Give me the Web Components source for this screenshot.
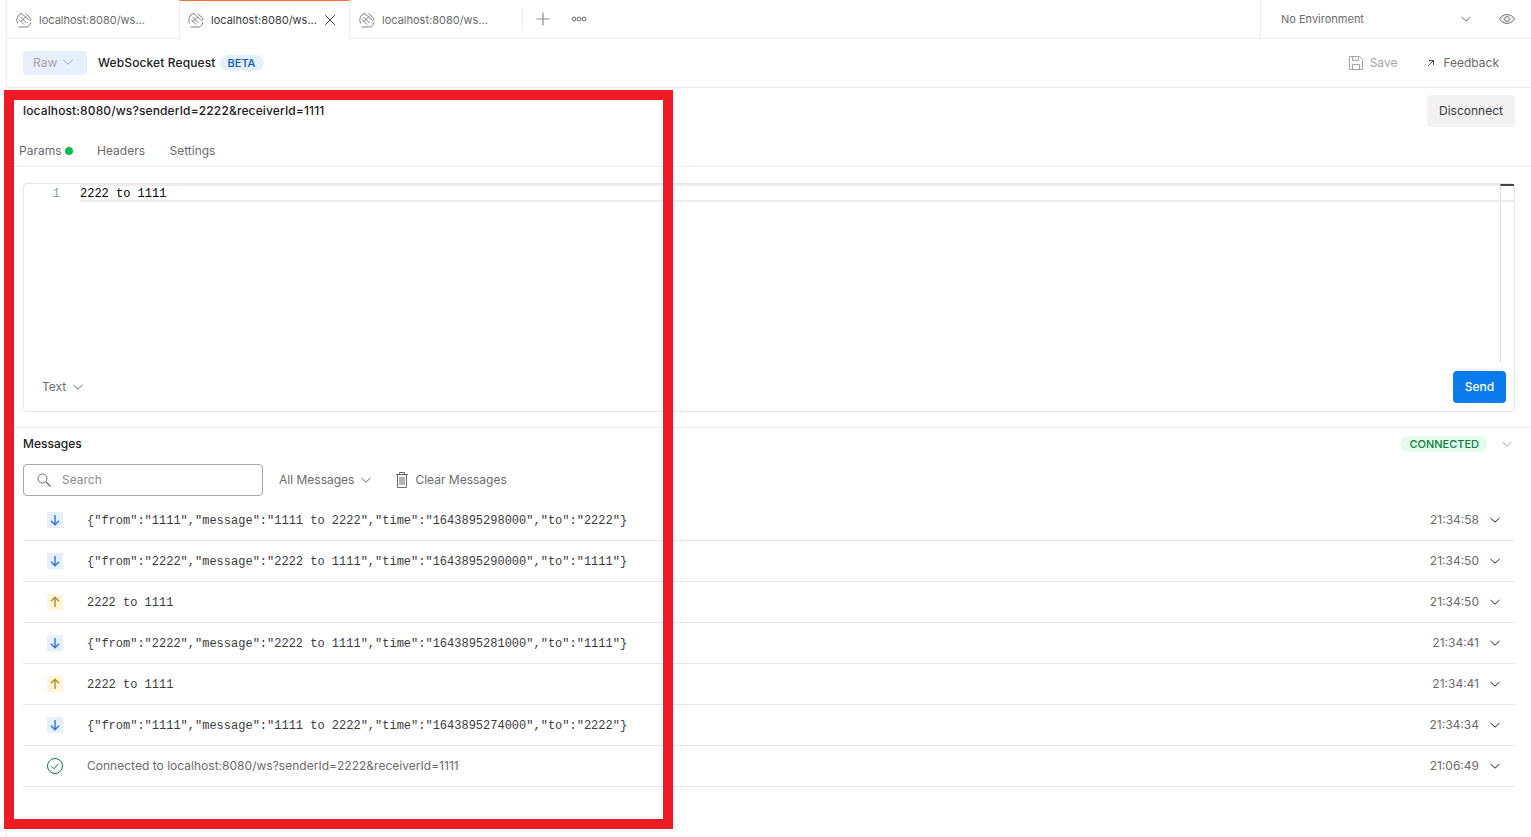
<!DOCTYPE html>
<html>
<head>
<meta charset="utf-8">
<title>WebSocket Request</title>
<style>
  html, body { margin: 0; height: 100%; overflow: hidden; background: #fff; }
  body { font-family: Inter, "Liberation Sans", sans-serif; font-size: 12px; color: #212121; }
</style>
</head>
<body>
<ws-app>
  <tab-strip slot="tabs">
    <ws-tab>localhost:8080/ws...</ws-tab>
    <ws-tab active>localhost:8080/ws...</ws-tab>
    <ws-tab>localhost:8080/ws...</ws-tab>
  </tab-strip>
  <request-toolbar slot="toolbar"></request-toolbar>
  <request-pane slot="request"></request-pane>
  <message-log slot="messages">
    <log-row kind="in" time="21:34:58">{"from":"1111","message":"1111 to 2222","time":"1643895298000","to":"2222"}</log-row>
    <log-row kind="in" time="21:34:50">{"from":"2222","message":"2222 to 1111","time":"1643895290000","to":"1111"}</log-row>
    <log-row kind="out" time="21:34:50">2222 to 1111</log-row>
    <log-row kind="in" time="21:34:41">{"from":"2222","message":"2222 to 1111","time":"1643895281000","to":"1111"}</log-row>
    <log-row kind="out" time="21:34:41">2222 to 1111</log-row>
    <log-row kind="in" time="21:34:34">{"from":"1111","message":"1111 to 2222","time":"1643895274000","to":"2222"}</log-row>
    <log-row kind="ok" time="21:06:49">Connected to localhost:8080/ws?senderId=2222&amp;receiverId=1111</log-row>
  </message-log>
</ws-app>
<red-frame></red-frame>

<script>
// Small shared icons
const chevron = (color, size = 12) =>
  `<svg width="${size}" height="${size}" viewBox="0 0 12 12" fill="none" stroke="${color}" stroke-width="1"><path d="M1.500 4 6 8.200 10.500 4"/></svg>`;

// Tilted plug inside a broken ring, on a base line
const socketIcon = `<svg width="16" height="16" viewBox="0 0 16 16" fill="none" stroke="#808080" stroke-width="1">
  <path d="M1.700 11.500A7 7 0 0 1 6 1.200"/><path d="M6 1.700 13.500 8.500"/><path d="M9.500 1.500 14 5.500c1 1 1 2 .5 3"/>
  <path d="M4.500 5 10.500 11M10 4.500 4.500 10"/><path d="M3 7.500 8 12.500"/>
  <path d="M14.800 10.500c-.5 2.500-2 4-4 4.500H2.500"/>
</svg>`;

class WsApp extends HTMLElement {
  constructor() {
    super();
    this.attachShadow({ mode: 'open' }).innerHTML = `
      <style>
      :host { display: block; height: 837px; margin-left: 6px; border-left: 1px solid #ededed; box-sizing: border-box; }
      </style>
      <slot name="tabs"></slot>
      <slot name="toolbar"></slot>
      <slot name="request"></slot>
      <slot name="messages"></slot>
    `;
  }
}
customElements.define('ws-app', WsApp);

class TabStrip extends HTMLElement {
  constructor() {
    super();
    this.attachShadow({ mode: 'open' }).innerHTML = `
      <style>
      :host { display: flex; height: 39px; box-sizing: border-box; border-bottom: 1px solid #ededed; color: #6b6b6b; }
      #tabs { display: flex; }
      #actions { display: flex; align-items: center; flex: 1; }
      #sep { width: 1px; height: 21px; background: #ededed; margin-top: -1px; }
      #plus { margin-left: 12px; display: flex; }
      #more { margin-left: 20px; display: flex; }
      #env { width: 271px; box-sizing: border-box; display: flex; align-items: center; border-left: 1px solid #ededed; padding: 0 16px 0 20px; font-size: 11px; color: #6b6b6b; }
      #env span { flex: 1; }
      #eye { margin-left: 27px; display: flex; }
      #env-chev { display: flex; }
      </style>
      <div id="tabs"><slot></slot></div>
      <div id="actions">
        <div id="sep"></div>
        <div id="plus"><svg width="16" height="16" viewBox="0 0 16 16" stroke="#8c8c8c" stroke-width="1.200"><path d="M8 1.500v13M1.500 8h13"/></svg></div>
        <div id="more"><svg width="16" height="8" viewBox="0 0 16 8" fill="none" stroke="#6b6b6b" stroke-width="1"><circle cx="3" cy="4" r="1.900"/><circle cx="8" cy="4" r="1.900"/><circle cx="13" cy="4" r="1.900"/></svg></div>
      </div>
      <div id="env">
        <span>No Environment</span>
        <div id="env-chev">${chevron('#6b6b6b')}</div>
        <div id="eye"><svg width="16" height="16" viewBox="0 0 16 16" fill="none" stroke="#6b6b6b" stroke-width="1"><path d="M.5 8C2.300 5.200 5 3.600 8 3.600S13.700 5.200 15.500 8C13.700 10.800 11 12.400 8 12.400S2.300 10.800.5 8z"/><circle cx="8" cy="8" r="2.400"/></svg></div>
      </div>
    `;
  }
}
customElements.define('tab-strip', TabStrip);

class WsTab extends HTMLElement {
  constructor() {
    super();
    const close = this.hasAttribute('active')
      ? `<svg id="x" width="12" height="12" viewBox="0 0 12 12" stroke="#4d4d4d" stroke-width="1"><path d="M1 1l10 10M11 1 1 11"/></svg>`
      : '';
    this.attachShadow({ mode: 'open' }).innerHTML = `
      <style>
      :host { display: flex; align-items: center; box-sizing: border-box; width: 172px; height: 39px; padding: 0 0 1px 9px; font-size: 11px; color: #6b6b6b; white-space: nowrap; border-top: 1px solid transparent; }
      :host([active]) { width: 171px; color: #3b3b3b; background: #fff; margin-bottom: -1px; border-top: 1px solid #ff6c37; border-left: 1px solid #ededed; border-right: 1px solid #ededed; padding-left: 8px; }
      svg { flex: none; }
      #label { margin-left: 7px; }
      #x { margin-left: 7px; }
      </style>
      ${socketIcon}<span id="label"><slot></slot></span>${close}
    `;
  }
}
customElements.define('ws-tab', WsTab);

class RequestToolbar extends HTMLElement {
  constructor() {
    super();
    this.attachShadow({ mode: 'open' }).innerHTML = `
      <style>
      :host { display: flex; align-items: center; height: 49px; box-sizing: border-box; border-bottom: 1px solid #ededed; padding: 0 32px 0 16px; }
      #raw { display: flex; align-items: center; gap: 5px; width: 64px; height: 24px; box-sizing: border-box; padding: 0 0 2px 10px; background: #e6effc; border-radius: 4px; color: #a6a6a6; }
      #name { margin-left: 11px; padding-bottom: 2px; font-weight: 500; color: #212121; letter-spacing: .12px; }
      #beta { margin-left: 4px; display: flex; align-items: center; height: 16px; padding: 0 9px 0 8px; border-radius: 8px; background: #e6effc; color: #0a55c0; font-size: 11px; font-weight: 500; }
      #spacer { flex: 1; }
      #save { display: flex; align-items: center; gap: 7px; color: #a6a6a6; padding-bottom: 2px; }
      #save svg { margin-top: 2px; }
      #feedback { margin-left: 30px; display: flex; align-items: center; gap: 8px; color: #6b6b6b; padding-bottom: 2px; }
      #feedback svg { margin-top: 2px; }
      </style>
      <div id="raw">Raw ${chevron('#a6a6a6')}</div>
      <div id="name">WebSocket Request</div>
      <div id="beta">BETA</div>
      <div id="spacer"></div>
      <div id="save">
        <svg width="14" height="14" viewBox="0 0 14 14" fill="none" stroke="#a6a6a6" stroke-width="1"><path d="M.5.500h10l3 3v10H.5z"/><path d="M3.500.500v4h6v-4M3.500 13.500v-5h7v5"/></svg>
        Save
      </div>
      <div id="feedback">
        <svg width="8" height="8" viewBox="0 0 8 8" fill="none" stroke="#4d4d4d" stroke-width="1"><path d="M1 7l5.500-5.500M2 1.500h4.500V6"/></svg>
        Feedback
      </div>
    `;
  }
}
customElements.define('request-toolbar', RequestToolbar);

class RequestPane extends HTMLElement {
  constructor() {
    super();
    this.attachShadow({ mode: 'open' }).innerHTML = `
      <style>
      :host { display: block; }
      #url { display: flex; justify-content: space-between; padding: 7px 16px 0 16px; height: 40px; font-weight: 500; color: #212121; }
      #url > span { line-height: 32px; letter-spacing: .13px; }
      #disconnect { width: 88px; height: 32px; background: #f2f2f2; border-radius: 4px; text-align: center; line-height: 32px; font-weight: 400; color: #3b3b3b; }
      #nav { display: flex; height: 32px; box-sizing: border-box; border-bottom: 1px solid #ededed; padding: 8px 0 0 12px; color: #6b6b6b; line-height: 16px; }
      #nav div { margin-right: 24.500px; display: flex; align-items: flex-start; }
      #dot { width: 8px; height: 8px; background: #0cbb52; border-radius: 50%; margin: 4px 0 0 3px; }
      #editor { display: flex; flex-direction: column; box-sizing: border-box; height: 229px; margin: 16px 16px 0 16px; border: 1px solid #e6e6e6; border-radius: 4px; }
      #line { display: flex; height: 18px; font: 12px/17px "Liberation Mono", monospace; }
      #gutter { width: 36px; text-align: right; color: #8c9aa5; padding-top: 2px; flex: none; }
      #code { flex: 1; margin-left: 20px; border-top: 2px solid #ededed; border-bottom: 2px solid #ededed; color: #000; height: 14px; line-height: 16px; }
      #thumb { width: 14px; height: 18px; flex: none; box-sizing: border-box; border-top: 2px solid #444; border-bottom: 2px solid #ededed; border-left: 1px solid #dedede; }
      #body { flex: 1; display: flex; justify-content: flex-end; padding-right: 13px; }
      #scroll { width: 1px; background: #dedede; height: 160px; }
      #foot { display: flex; justify-content: space-between; align-items: center; padding: 0 8px 8px 18px; }
      #type { display: flex; align-items: center; gap: 6px; color: #6b6b6b; padding-bottom: 1px; }
      #send { width: 53px; height: 32px; background: #097bed; border-radius: 4px; color: #fff; text-align: center; line-height: 32px; font-weight: 500; }
      </style>
      <div id="url"><span>localhost:8080/ws?senderId=2222&amp;receiverId=1111</span><div id="disconnect">Disconnect</div></div>
      <div id="nav">
        <div>Params<span id="dot"></span></div>
        <div>Headers</div>
        <div>Settings</div>
      </div>
      <div id="editor">
        <div id="line"><div id="gutter">1</div><div id="code">2222 to 1111</div><div id="thumb"></div></div>
        <div id="body"><div id="scroll"></div></div>
        <div id="foot">
          <div id="type">Text ${chevron('#6b6b6b')}</div>
          <div id="send">Send</div>
        </div>
      </div>
    `;
  }
}
customElements.define('request-pane', RequestPane);

class MessageLog extends HTMLElement {
  constructor() {
    super();
    this.attachShadow({ mode: 'open' }).innerHTML = `
      <style>
      :host { display: block; margin-top: 15px; border-top: 1px solid #ededed; padding: 0 16px; }
      #head { display: flex; align-items: center; height: 31px; }
      #title { flex: 1; font-weight: 500; color: #212121; }
      #status { display: flex; align-items: center; height: 16px; padding: 0 8px 0 9px; border-radius: 8px; background: #e5fbee; color: #0a7d3c; font-size: 11px; font-weight: 500; }
      #toggle { display: flex; margin-left: 14px; margin-right: 2px; }
      #filters { display: flex; align-items: center; margin-top: 5px; height: 32px; color: #6b6b6b; }
      #search { display: flex; align-items: center; box-sizing: border-box; width: 240px; height: 32px; border: 1px solid #a6a6a6; border-radius: 4px; padding: 0 0 1px 12px; gap: 10px; color: #8c8c8c; }
      #search svg { margin-top: 1px; }
      #all { display: flex; align-items: center; gap: 6px; margin-left: 16px; padding-bottom: 1px; }
      #clear { display: flex; align-items: center; gap: 7px; margin-left: 24px; padding-bottom: 1px; }
      #rows { margin-top: 4px; }
      </style>
      <div id="head">
        <div id="title">Messages</div>
        <div id="status">CONNECTED</div>
        <div id="toggle">${chevron('#a6a6a6')}</div>
      </div>
      <div id="filters">
        <div id="search">
          <svg width="16" height="16" viewBox="0 0 16 16" fill="none" stroke="#6b6b6b" stroke-width="1"><circle cx="6.500" cy="6.500" r="4.500"/><path d="M10 10l4.500 4.500" stroke-width="1.300"/></svg>
          Search
        </div>
        <div id="all">All Messages ${chevron('#6b6b6b')}</div>
        <div id="clear">
          <svg width="12" height="16" viewBox="0 0 12 16" fill="none" stroke="#6b6b6b" stroke-width="1"><path d="M0 2.500h12M3.500 2.500v-2h5v2M1.500 2.500v13h9v-13M4 5v8M6 5v8M8 5v8"/></svg>
          Clear Messages
        </div>
      </div>
      <div id="rows"><slot></slot></div>
    `;
  }
}
customElements.define('message-log', MessageLog);

const rowIcons = {
  in: `<span class="badge" style="background:#e6effc"><svg width="16" height="16" viewBox="0 0 16 16" fill="none" stroke="#2f73d8" stroke-width="1.400"><path d="M8 3v9.500M4 8.800 8 12.800l4-4"/></svg></span>`,
  out: `<span class="badge" style="background:#fff6d9"><svg width="16" height="16" viewBox="0 0 16 16" fill="none" stroke="#b8892a" stroke-width="1.400"><path d="M8 13V3.500M4 7.200 8 3.200l4 4"/></svg></span>`,
  ok: `<svg width="16" height="16" viewBox="0 0 16 16" fill="none" stroke="#0a7d3c" stroke-width="1"><circle cx="8" cy="8" r="7.500"/><path d="M4.500 8.200 7 10.700l4.500-5"/></svg>`,
};

class LogRow extends HTMLElement {
  constructor() {
    super();
    const kind = this.getAttribute('kind');
    this.attachShadow({ mode: 'open' }).innerHTML = `
      <style>
      :host { display: flex; align-items: center; height: 41px; box-sizing: border-box; border-bottom: 1px solid #e6e6e6; padding: 0 14px 0 24px; color: #3b3b3b; }
      #icon { width: 16px; height: 16px; display: flex; flex: none; }
      .badge { display: flex; width: 16px; height: 16px; }
      #text { flex: 1; margin-left: 24px; padding-top: 2px; white-space: nowrap; font: 12px/16px "Liberation Mono", monospace; }
      :host([kind="ok"]) #text { padding-top: 0; font: 12px/16px Inter, "Liberation Sans", sans-serif; color: #6b6b6b; letter-spacing: .02px; }
      #time { color: #6b6b6b; padding-bottom: 1px; }
      #chev { display: flex; margin-left: 10px; }
      </style>
      <div id="icon">${rowIcons[kind]}</div>
      <div id="text"><slot></slot></div>
      <div id="time">${this.getAttribute('time')}</div>
      <div id="chev">${chevron('#212121')}</div>
    `;
  }
}
customElements.define('log-row', LogRow);

// The red annotation drawn over the screenshot
class RedFrame extends HTMLElement {
  constructor() {
    super();
    this.attachShadow({ mode: 'open' }).innerHTML = `
      <style>
      :host { position: absolute; left: 4px; top: 90px; width: 669px; height: 739px; box-sizing: border-box; border: 10px solid #ed1c24; pointer-events: none; }
      </style>
    `;
  }
}
customElements.define('red-frame', RedFrame);
</script>
</body>
</html>
